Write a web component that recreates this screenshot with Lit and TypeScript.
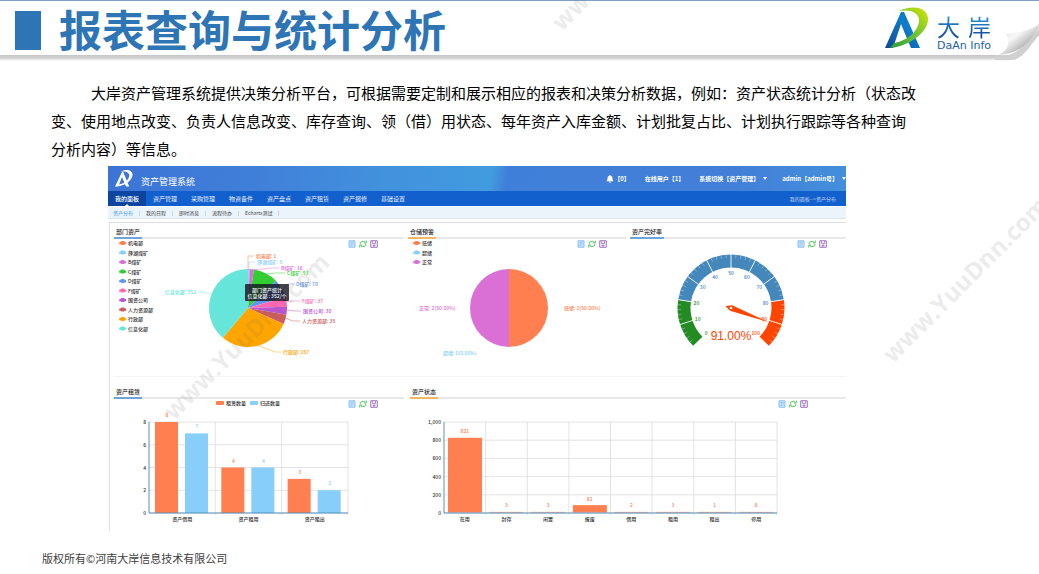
import { LitElement, html, svg, css } from "lit";
import { customElement, property } from "lit/decorators.js";

interface Slice {
  name: string;
  value: number;
  color: string;
  label: string;
  line: string;
  x: number;
  y: number;
  anchor?: string;
}

const ASSETS: Slice[] = [
  { name: "机电部", value: 1, color: "#ff7f50", label: "机电部: 1", line: "248,270 248,256 254,256", x: 256, y: 256 },
  { name: "薛湖煤矿", value: 5, color: "#87cefa", label: "薛湖煤矿: 5", line: "249,270 249,262 255,262", x: 257, y: 262 },
  { name: "B煤矿", value: 16, color: "#da70d6", label: "B煤矿: 16", line: "252,270 272,268 279,268", x: 281, y: 268 },
  { name: "C煤矿", value: 93, color: "#32cd32", label: "C煤矿: 93", line: "266,274 275,273 285,273", x: 287, y: 273 },
  { name: "D煤矿", value: 70, color: "#6495ed", label: "D煤矿: 70", line: "282,290 288,284 294,284", x: 296, y: 284 },
  { name: "F煤矿", value: 37, color: "#ff69b4", label: "F煤矿: 37", line: "286,302 293,301 300,301", x: 302, y: 301 },
  { name: "国资公司", value: 30, color: "#ba55d3", label: "国资公司: 30", line: "287,310 295,311 301,311", x: 303, y: 311 },
  { name: "人力资源部", value: 35, color: "#cd5c5c", label: "人力资源部: 35", line: "285,318 293,321 300,321", x: 302, y: 321 },
  { name: "行政部", value: 267, color: "#ffa500", label: "行政部: 267", line: "257,345 275,352 281,352", x: 283, y: 352 },
  { name: "信息化部", value: 352, color: "#66e6da", label: "信息化部: 352", line: "211,294 203,292 198,292", x: 196, y: 292, anchor: "end" },
];

const STOCK: Slice[] = [
  { name: "低储", value: 2, color: "#ff7f50", label: "低储: 2(50.00%)", line: "", x: 564, y: 308 },
  { name: "超储", value: 0, color: "#87cefa", label: "超储: 0(0.00%)", line: "", x: 443, y: 353 },
  { name: "正常", value: 2, color: "#da70d6", label: "正常: 2(50.00%)", line: "", x: 419, y: 308 },
];

const LEASE = [
  { name: "资产借用", values: [8, 7] },
  { name: "资产租用", values: [4, 4] },
  { name: "资产租出", values: [3, 2] },
];

const STATES: [string, number][] = [
  ["在用", 821], ["封存", 3], ["闲置", 3], ["报废", 81], ["借用", 2], ["租用", 3], ["租出", 1], ["停用", 6],
];

/* Point on a circle; the angle is in degrees, clockwise from twelve o'clock. */
const polar = (cx: number, cy: number, r: number, deg: number) => {
  const a = ((deg - 90) * Math.PI) / 180;
  return [cx + r * Math.cos(a), cy + r * Math.sin(a)];
};

const sector = (cx: number, cy: number, r: number, from: number, to: number) => {
  const [x1, y1] = polar(cx, cy, r, from);
  const [x2, y2] = polar(cx, cy, r, to);
  return `M${cx} ${cy}L${x1} ${y1}A${r} ${r} 0 ${to - from > 180 ? 1 : 0} 1 ${x2} ${y2}Z`;
};

const arc = (cx: number, cy: number, r: number, from: number, to: number) => {
  const [x1, y1] = polar(cx, cy, r, from);
  const [x2, y2] = polar(cx, cy, r, to);
  return `M${x1} ${y1}A${r} ${r} 0 ${to - from > 180 ? 1 : 0} 1 ${x2} ${y2}`;
};

const chartStyles = css`
  :host {
    display: block;
  }
  svg {
    display: block;
    width: 100%;
  }
  text {
    font: 500 5px "Noto Sans CJK SC", sans-serif;
    fill: #333;
  }
`;

@customElement("pie-chart")
class PieChart extends LitElement {
  static styles = [
    chartStyles,
    css`
      .leader {
        fill: none;
        stroke-width: 0.5;
      }
      .tip {
        fill: rgba(20, 20, 30, 0.8);
      }
      .tip-text {
        fill: #fff;
      }
    `,
  ];
  @property({ attribute: false }) slices: Slice[] = [];
  @property() box = "";
  @property({ type: Number }) cx = 0;
  @property({ type: Number }) left = 0;
  @property({ type: Boolean }) tip = false;

  render() {
    const total = this.slices.reduce((s, d) => s + d.value, 0);
    let angle = 0;
    return html`<svg viewBox=${this.box} role="img">
      ${this.slices.map((d, i) => {
        const y = 243 + i * 9.5;
        return svg`<path d="M${this.left} ${y + 0.4}q0-1.4 1.4-1.4 .4-.9 1.6-.9h1.4q1.2 0 1.6.9 1.4 0 1.4 1.4 0 .9-1.4.9 -.4.7-1.6.7h-1.4q-1.2 0-1.6-.7-1.4 0-1.4-.9z" fill=${d.color}></path>
          <text x=${this.left + 9} y=${y + 2}>${d.name}</text>`;
      })}
      ${this.slices.map((d) => {
        const from = angle;
        angle += (d.value / total) * 360;
        return svg`<path d=${sector(this.cx, 308, 39, from, angle)} fill=${d.color}></path>`;
      })}
      ${this.slices.map(
        (d) => svg`<polyline class="leader" points=${d.line} stroke=${d.color}></polyline>
          <text x=${d.x} y=${d.y + 2} text-anchor=${d.anchor ?? "start"} style="fill:${d.color}">${d.label}</text>`
      )}
      ${this.tip
        ? svg`<rect class="tip" x="245" y="284" width="44" height="17" rx="1"></rect>
          <text class="tip-text" x="267" y="292" text-anchor="middle">部门资产统计</text>
          <text class="tip-text" x="267" y="298" text-anchor="middle">信息化部 : 352/个</text>`
        : ""}
    </svg>`;
  }
}

@customElement("gauge-chart")
class GaugeChart extends LitElement {
  static styles = [
    chartStyles,
    css`
      .band {
        fill: none;
        stroke-width: 13;
      }
      .split {
        stroke: #fff;
        stroke-width: 0.9;
      }
      .tick {
        stroke: #dfe9f2;
        stroke-width: 0.4;
      }
      .value {
        font: 12px "Liberation Sans", sans-serif;
        fill: #ff4500;
      }
    `,
  ];
  @property({ type: Number }) value = 0;

  render() {
    const cx = 731;
    const cy = 308;
    const at = (v: number) => -135 + v * 2.7;
    const color = (v: number) => (v <= 20 ? "#228b22" : v <= 80 ? "#4488bb" : "#ff4500");
    const bands: [number, number][] = [[0, 20], [20, 80], [80, 100]];
    const ticks = Array.from({ length: 51 }, (_, i) => i * 2);
    const tip = polar(cx, cy, 40, at(this.value));
    const l = polar(cx, cy, 3, at(this.value) - 90);
    const r = polar(cx, cy, 3, at(this.value) + 90);
    const tail = polar(cx, cy, 6, at(this.value) + 180);
    return html`<svg viewBox="630 239 216 137" role="img">
      ${bands.map(([a, b]) => svg`<path class="band" d=${arc(cx, cy, 47, at(a), at(b))} stroke=${color(b)}></path>`)}
      ${ticks.map((v) => {
        const big = v % 10 === 0;
        if (v === 0 || v === 100) return "";
        const [x1, y1] = polar(cx, cy, big ? 40 : 50, at(v));
        const [x2, y2] = polar(cx, cy, 54, at(v));
        return svg`<line class=${big ? "split" : "tick"} x1=${x1} y1=${y1} x2=${x2} y2=${y2}></line>`;
      })}
      ${ticks
        .filter((v) => v % 10 === 0)
        .map((v) => {
          const [x, y] = polar(cx, cy, 35, at(v));
          return svg`<text x=${x} y=${y + 2} text-anchor="middle" style="fill:${color(v)}">${v}</text>`;
        })}
      <path d="M${tip}L${l}L${tail}L${r}Z" fill="#ff4500"></path>
      <circle cx=${cx} cy=${cy} r="1.3" fill="#fff"></circle>
      <text class="value" x=${cx} y="340" text-anchor="middle">${this.value.toFixed(2)}%</text>
    </svg>`;
  }
}

const barStyles = css`
  .grid {
    stroke: #dcdcdc;
    stroke-width: 0.8;
  }
  .axis {
    stroke: #4488bb;
    stroke-width: 0.9;
  }
`;

@customElement("lease-chart")
class LeaseChart extends LitElement {
  static styles = [chartStyles, barStyles];

  render() {
    const colors = ["#ff7f50", "#87cefa"];
    const step = 199 / 3;
    return html`<svg viewBox="114 399 290 132" role="img">
      <rect x="216" y="401" width="8" height="4" rx="1" fill=${colors[0]}></rect>
      <text x="226" y="405">租赁数量</text>
      <rect x="250" y="401" width="8" height="4" rx="1" fill=${colors[1]}></rect>
      <text x="260" y="405">归还数量</text>
      ${[0, 2, 4, 6, 8].map((v) => {
        const y = 513 - (v / 8) * 91;
        return svg`<line class="grid" x1="149" x2="348" y1=${y} y2=${y}></line>
          <text x="146" y=${y + 2} text-anchor="end">${v}</text>`;
      })}
      ${[1, 2, 3].map((i) => svg`<line class="grid" x1=${149 + i * step} x2=${149 + i * step} y1="422" y2="515"></line>`)}
      ${LEASE.map((g, i) => {
        const x0 = 149 + i * step;
        return svg`${g.values.map((v, k) => {
          const h = (v / 8) * 91;
          const x = x0 + 6 + k * 30;
          return svg`<rect x=${x} y=${513 - h} width="23" height=${h} fill=${colors[k]}></rect>
            <text x=${x + 12} y=${508 - h} text-anchor="middle" style="fill:${colors[k]}">${v}</text>`;
        })}
        <text x=${x0 + step / 2} y="521" text-anchor="middle">${g.name}</text>`;
      })}
      <path class="axis" d="M149 422V513H348" fill="none"></path>
    </svg>`;
  }
}

@customElement("state-chart")
class StateChart extends LitElement {
  static styles = [chartStyles, barStyles];

  render() {
    const step = 333 / 8;
    return html`<svg viewBox="410 399 436 132" role="img">
      ${[0, 200, 400, 600, 800, 1000].map((v) => {
        const y = 513 - (v / 1000) * 91;
        return svg`<line class="grid" x1="444" x2="777" y1=${y} y2=${y}></line>
          <text x="441" y=${y + 2} text-anchor="end">${v.toLocaleString("en-US")}</text>`;
      })}
      ${STATES.map(([name, v], i) => {
        const x0 = 444 + i * step;
        const h = Math.max(0.6, (v / 1000) * 91);
        return svg`<line class="grid" x1=${x0 + step} x2=${x0 + step} y1="422" y2="515"></line>
          <rect x=${x0 + 4} y=${512.5 - h} width="34" height=${h} fill="#ff7f50"></rect>
          <text x=${x0 + step / 2} y=${508 - h} text-anchor="middle" style="fill:#ff7f50">${v}</text>
          <text x=${x0 + step / 2} y="521" text-anchor="middle">${name}</text>`;
      })}
      <path class="axis" d="M444 422V513H777" fill="none"></path>
    </svg>`;
  }
}

@customElement("chart-panel")
class ChartPanel extends LitElement {
  static styles = css`
    :host {
      display: block;
      min-width: 0;
    }
    .head {
      display: flex;
      align-items: flex-end;
      box-sizing: border-box;
      height: 16px;
      border-bottom: 2px solid #e8e8e8;
    }
    :host([low]) .head {
      height: 22px;
    }
    .title {
      margin: 0 0 -2px;
      padding: 0 2px 1px;
      font: 500 6px/8px "Noto Sans CJK SC", sans-serif;
      color: #222;
      border-bottom: 2px solid #6ea3dc;
    }
    :host([amber]) .title {
      border-color: #f0b860;
    }
    .body {
      display: grid;
      grid-template-columns: minmax(0, 1fr);
    }
    .tools,
    ::slotted(*) {
      grid-area: 1 / 1;
    }
    .tools {
      display: flex;
      gap: 3px;
      justify-self: end;
      align-self: start;
      padding: 1px 26px 0 0;
    }
    :host([near]) .tools {
      padding-right: 19px;
    }
    :host([far]) .tools {
      padding-right: 38px;
    }
    .tool {
      display: block;
      width: 8px;
      height: 8px;
      padding: 0;
      border: 0;
      background: none;
      cursor: pointer;
    }
    .tool svg {
      display: block;
      width: 8px;
      height: 8px;
      fill: none;
      stroke-width: 2;
    }
  `;
  @property() heading = "";

  render() {
    return html`<div class="head"><h2 class="title">${this.heading}</h2></div>
      <div class="body">
        <slot></slot>
        <div class="tools">
          <button class="tool" aria-label="数据视图">
            <svg viewBox="0 0 16 16" stroke="#8fc3f5"><path d="M2 1.500H14V14.500H2Z" fill="#c4e0fb" /><path d="M5 5H11M5 8H11M5 11H8" stroke-width="1.500" /></svg>
          </button>
          <button class="tool" aria-label="还原">
            <svg viewBox="0 0 16 16" stroke="#4fc95a"><path d="M2 8A6 5.500 0 0 1 12.500 4.500M14.500 1V6H10M14 8A6 5.500 0 0 1 3.500 11.500M1.500 15V10H6" /></svg>
          </button>
          <button class="tool" aria-label="保存为图片">
            <svg viewBox="0 0 16 16" stroke="#9c6cbf"><path d="M1.500 1.500H14.500V14.500H1.500Z" /><path d="M5 2V7H11V2M8 8V14M5 11H11" stroke-width="1.500" /></svg>
          </button>
        </div>
      </div>`;
  }
}

@customElement("app-root")
class AppRoot extends LitElement {
  static styles = css`
    :host {
      display: block;
      position: relative;
      overflow: hidden;
      min-height: 100vh;
      background: #fff;
      color: #000;
      font-family: "Noto Sans CJK SC", sans-serif;
    }
    .banner {
      display: flex;
      align-items: flex-start;
      box-sizing: border-box;
      height: 61px;
      border-top: 1px solid #7f9fc8;
      background: linear-gradient(#fff 54px, #c6c6c6 54px, #d2d2d2 57px, #fff 60px);
    }
    .block {
      width: 26px;
      height: 39px;
      margin: 10px 18px 0 15px;
      background: #2e75b6;
    }
    .heading {
      flex: 1;
      margin: 0;
      font-size: 43px;
      line-height: 54px;
      font-weight: 700;
      color: #2e75b6;
      white-space: nowrap;
    }
    .mark {
      width: 44px;
      height: 42px;
      margin: 6px 8px 0 0;
    }
    .brand {
      display: grid;
      margin-top: 10px;
    }
    .brand-name {
      display: flex;
      justify-content: space-between;
      font-size: 23px;
      line-height: 30px;
      color: transparent;
      background: linear-gradient(#2590d2 20%, #1450a0 80%);
      background-clip: text;
      -webkit-background-clip: text;
    }
    .brand-sub {
      font: 11px/10px "DejaVu Sans", sans-serif;
      color: #1d5fa8;
    }
    .curl {
      width: 44px;
      height: 44px;
      margin: 18px 0 0 4px;
    }
    .intro {
      margin: 18px 100px 3px 51px;
      font-size: 15px;
      line-height: 28px;
      text-indent: 40px;
      white-space: nowrap;
    }
    .dash {
      margin: 0 193px 0 108px;
      font-size: 6px;
    }
    .top {
      display: flex;
      align-items: center;
      height: 25px;
      color: #fff;
      background: linear-gradient(100deg, #3c74d6 0%, #407fd9 20%, #4292dd 38%, #419bdf 52%, #407fd9 54%, #437fd8 85%, #4390dc 100%);
    }
    .top-logo {
      width: 18px;
      height: 17px;
      margin-left: 7px;
    }
    .system {
      flex: 1;
      margin-left: 8px;
      padding-top: 6px;
      font-size: 9px;
      line-height: 12px;
    }
    .menu {
      display: flex;
      gap: 15px;
    }
    .menu button {
      display: flex;
      align-items: center;
      gap: 4px;
      padding: 0;
      border: 0;
      background: none;
      color: #fff;
      font: 700 6px/8px "Noto Sans CJK SC", sans-serif;
      white-space: nowrap;
      cursor: pointer;
    }
    .bell {
      width: 8px;
      height: 8px;
      margin-right: -4px;
      fill: #fff;
    }
    .caret {
      border: 2px solid transparent;
      border-top: 3px solid #fff;
      border-bottom: 0;
    }
    .nav {
      display: flex;
      height: 15px;
      line-height: 15px;
      background: #125fce;
    }
    .nav a {
      position: relative;
      padding: 0 7px;
      color: #e6effb;
      text-decoration: none;
    }
    .nav .on {
      background: #0b459f;
      color: #fff;
      font-weight: 500;
    }
    .on::after {
      content: "";
      position: absolute;
      left: 50%;
      bottom: 0;
      margin-left: -2px;
      border: 2px solid transparent;
      border-top: 0;
      border-bottom-color: #fff;
    }
    .crumb {
      margin-left: auto;
      padding-right: 10px;
      font-size: 5px;
      color: #c5d9f4;
    }
    .subnav {
      display: flex;
      padding-left: 5px;
      margin-top: 1px;
      border-bottom: 1px solid #d8e4ee;
      background: #ebf3fb;
      font-size: 5px;
      line-height: 11px;
    }
    .subnav a {
      color: #444;
      text-decoration: none;
    }
    .subnav a::after {
      content: "";
      display: inline-block;
      height: 5px;
      margin: 0 6px;
      border-right: 1px solid #ccd6df;
      vertical-align: middle;
    }
    .subnav .here {
      color: #3f9be8;
    }
    .board {
      margin: 3px 0 0 1px;
      padding-left: 4px;
      border-left: 1px solid #dedede;
      border-top: 1px solid #dedede;
    }
    .row {
      display: grid;
      grid-template-columns: 290fr 218fr 216fr;
      column-gap: 4px;
    }
    .row + .row {
      grid-template-columns: 290fr 436fr;
      column-gap: 6px;
      border-top: 1px solid #f5f5f5;
    }
    .foot {
      margin: 18px 42px 0;
      font-size: 11px;
      line-height: 18px;
      color: #404040;
    }
    .stamp {
      position: absolute;
      transform: rotate(-45deg);
      transform-origin: 0 100%;
      font: 700 24px/24px "Open Sans", sans-serif;
      color: rgba(110, 110, 110, 0.15);
      white-space: nowrap;
      pointer-events: none;
    }
    .stamp-a {
      left: 176px;
      top: 399px;
    }
    .stamp-b {
      left: 895px;
      top: 342px;
    }
    .stamp-c {
      left: 564px;
      top: 10px;
    }
  `;

  render() {
    const nav = ["我的面板", "资产管理", "采购管理", "物资备件", "资产盘点", "资产租赁", "资产报修", "基础设置"];
    const sub = ["资产分布", "我的日程", "即时消息", "流程待办", "Echarts测试"];
    return html`
      <header class="banner">
        <div class="block"></div>
        <h1 class="heading">报表查询与统计分析</h1>
        <svg class="mark" viewBox="0 0 44 42" aria-hidden="true">
          <defs>
            <linearGradient id="b" x1="0" y1="1" x2="1" y2="0"><stop offset="0" stop-color="#12468f" /><stop offset=".6" stop-color="#0b7cc9" /></linearGradient>
            <linearGradient id="g" x1="0" y1="1" x2="1" y2="0"><stop offset="0" stop-color="#2f9e3c" /><stop offset=".5" stop-color="#6cc03a" /><stop offset="1" stop-color="#d6e600" /></linearGradient>
          </defs>
          <path d="M0 41L16 5H19L35 41H26L16 17L8 41Z" fill="url(#b)" />
          <path d="M14 4C24-1 41-2 43 11C44 26 22 40 5 41L9 36C22 34 34 24 34 13C34 5 24 2 14 4Z" fill="url(#g)" />
        </svg>
        <div class="brand">
          <span class="brand-name"><span>大</span><span>岸</span></span>
          <span class="brand-sub">DaAn Info</span>
        </div>
        <svg class="curl" viewBox="0 0 44 44" aria-hidden="true">
          <defs>
            <linearGradient id="c" x1="0" y1="0" x2="1" y2="1"><stop offset=".1" stop-color="#d9d9d9" /><stop offset=".4" stop-color="#f8f8f8" /><stop offset=".65" stop-color="#bdbdbd" /></linearGradient>
          </defs>
          <path d="M14 36L44 10V44H14Z" fill="#fff" />
          <path d="M0 36H14C26 32 35 20 44 10V16C34 28 28 40 17 41H0Z" fill="#d0d0d0" />
          <path d="M11 15C16 14 34 13 44 5V9C35 22 26 35 3 36C14 31 15 24 11 15Z" fill="url(#c)" />
        </svg>
      </header>

      <p class="intro">大岸资产管理系统提供决策分析平台，可根据需要定制和展示相应的报表和决策分析数据，例如：资产状态统计分析（状态改<br />变、使用地点改变、负责人信息改变、库存查询、领（借）用状态、每年资产入库金额、计划批复占比、计划执行跟踪等各种查询<br />分析内容）等信息。</p>

      <main class="dash">
        <div class="top">
          <svg class="top-logo" viewBox="0 0 44 42" aria-hidden="true">
            <path d="M0 41L17 5H20L35 41H27L17 17L8 41ZM14 4C24-2 42-2 43 11C44 26 22 40 5 41L9 36C22 34 35 24 35 13C35 5 25 2 14 4Z" fill="#fff" />
          </svg>
          <span class="system">资产管理系统</span>
          <div class="menu">
            <button><svg class="bell" viewBox="0 0 16 16" aria-hidden="true"><path d="M8 0C9 0 9 1 9 1.500C12 2 13 4 13 7C13 10 14 11 15.500 12.500H.5C2 11 3 10 3 7C3 4 4 2 7 1.500C7 1 7 0 8 0ZM6 13.500H10C10 16.500 6 16.500 6 13.500Z" /></svg>【0】</button>
            <button>在线用户【1】</button>
            <button>系统切换【资产管理】<i class="caret"></i></button>
            <button>admin【admin号】<i class="caret"></i></button>
          </div>
        </div>
        <nav class="nav">
          ${nav.map((t, i) => html`<a href="#" class=${i === 0 ? "on" : ""}>${t}</a>`)}
          <span class="crumb">我的面板--&gt;资产分布</span>
        </nav>
        <nav class="subnav">${sub.map((t, i) => html`<a href="#" class=${i === 0 ? "here" : ""}>${t}</a>`)}</nav>
        <div class="board">
          <div class="row">
            <chart-panel heading="部门资产"><pie-chart .slices=${ASSETS} box="114 239 290 137" cx="248" left="119" tip></pie-chart></chart-panel>
            <chart-panel heading="仓储预警" amber near><pie-chart .slices=${STOCK} box="408 239 218 137" cx="509" left="413"></pie-chart></chart-panel>
            <chart-panel heading="资产完好率" near><gauge-chart value="91"></gauge-chart></chart-panel>
          </div>
          <div class="row">
            <chart-panel heading="资产租赁" low><lease-chart></lease-chart></chart-panel>
            <chart-panel heading="资产状态" low amber far><state-chart></state-chart></chart-panel>
          </div>
        </div>
      </main>

      <footer class="foot">版权所有©河南大岸信息技术有限公司</footer>

      <div class="stamp stamp-a" aria-hidden="true">www.YuuDnn.com</div>
      <div class="stamp stamp-b" aria-hidden="true">www.YuuDnn.com</div>
      <div class="stamp stamp-c" aria-hidden="true">www.YuuDnn.com</div>
    `;
  }
}
